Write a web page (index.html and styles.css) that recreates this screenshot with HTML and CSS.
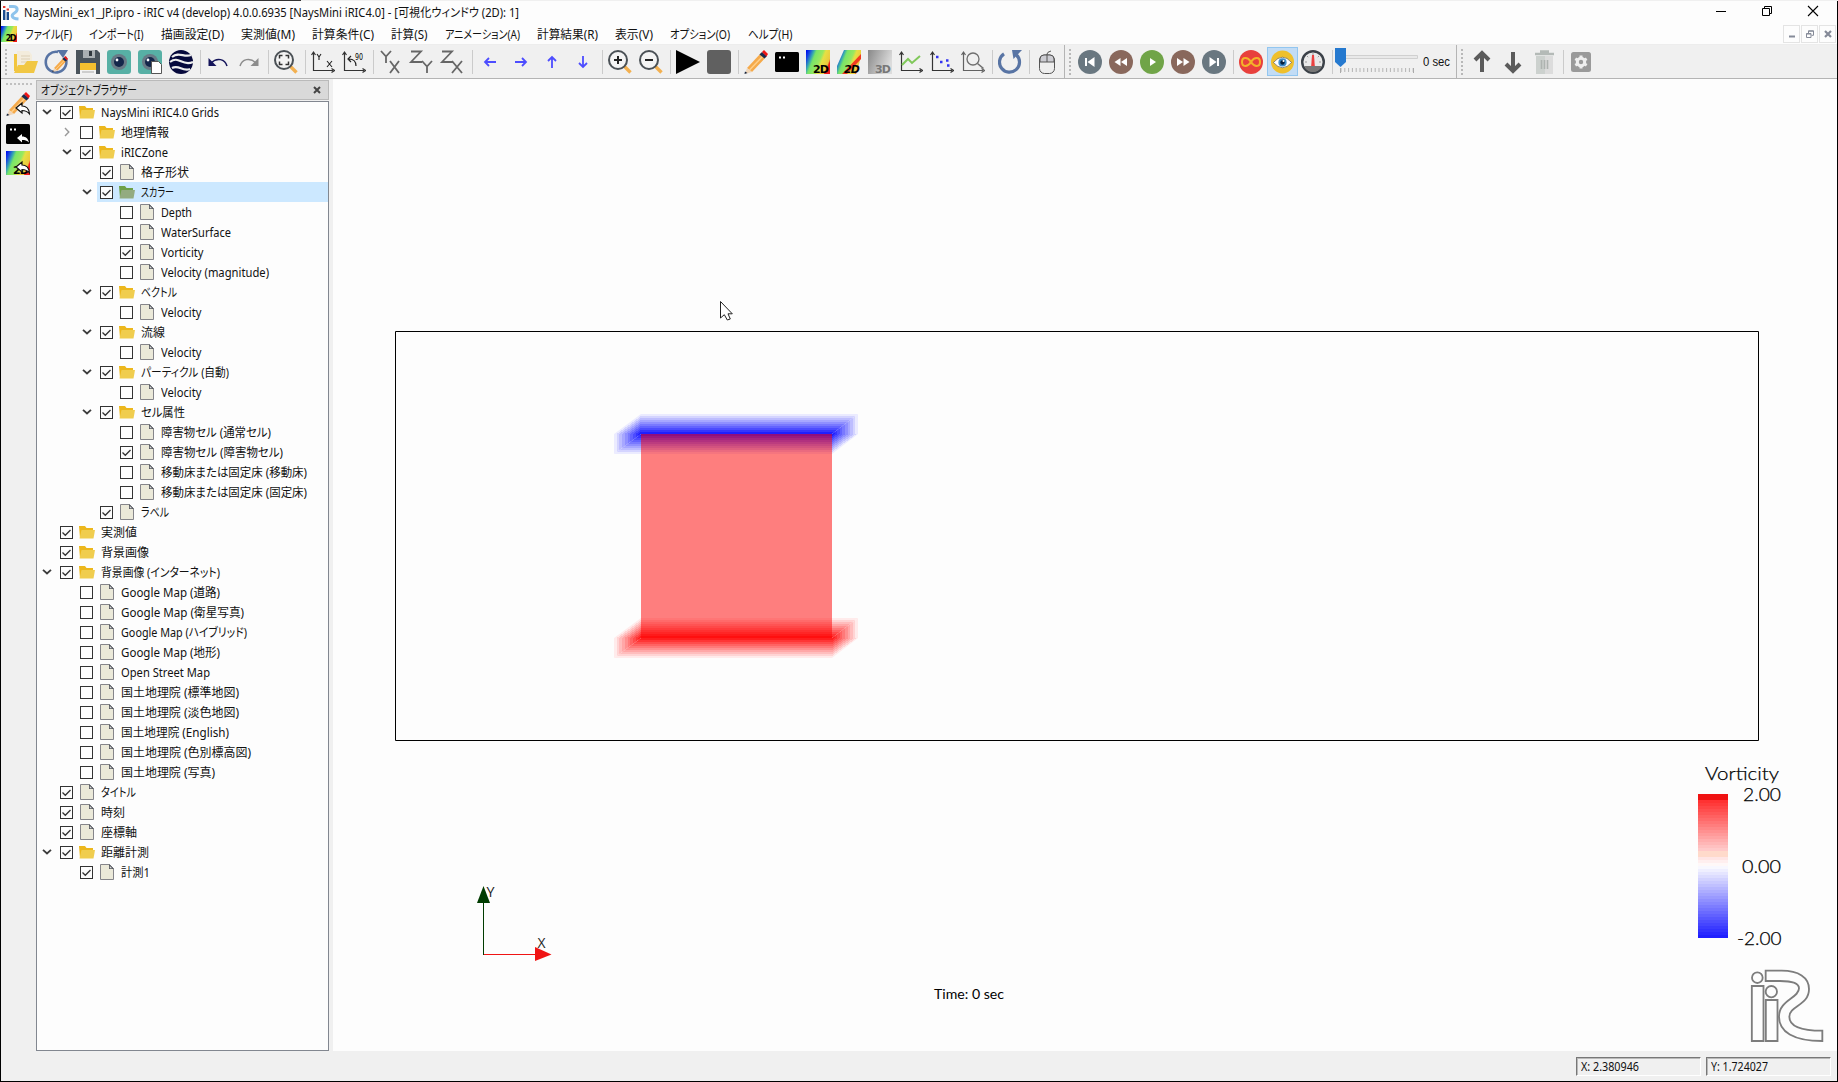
FILE: index.html
```html
<!DOCTYPE html>
<html lang="ja">
<head>
<meta charset="utf-8">
<title>NaysMini_ex1_JP.ipro - iRIC v4</title>
<link rel="stylesheet" href="styles.css">
</head>
<body>
<svg class="defs" width="0" height="0">
  <defs>
    <linearGradient id="rainbow" x1="0" y1="0.1" x2="1" y2="0.5">
      <stop offset="0" stop-color="#0010f0"/><stop offset=".12" stop-color="#1848e0"/><stop offset=".26" stop-color="#38a8b0"/><stop offset=".36" stop-color="#78e468"/><stop offset=".6" stop-color="#98e860"/><stop offset=".7" stop-color="#e6e044"/><stop offset=".94" stop-color="#ecc83c"/><stop offset="1.080" stop-color="#f01818"/>
    </linearGradient>
    <linearGradient id="grays" x1="0" y1="0" x2="1" y2=".4"><stop offset="0" stop-color="#888"/><stop offset="1" stop-color="#dcdcdc"/></linearGradient>
    <symbol id="field2d" viewBox="0 0 24 24"><rect width="24" height="24" fill="url(#rainbow)"/><path d="M24 15v9h-6z" fill="#f01818"/></symbol>
    <symbol id="pencil" viewBox="0 0 24 24"><path d="M3 18 17 3l5 4L8 22z" fill="#f5aa4b"/><path d="M5.500 20 20 5" stroke="#ffd08a" stroke-width="1.500"/><path d="M3 18l5 4-7 2z" fill="#efd5b8"/><path d="M1 21.500 3.500 23 .5 24z" fill="#14233c"/><path d="M15.500 4.500 18 2l5 4-2.500 2.500z" fill="#1c2c50"/><path d="M18 2l2-2 4 4-1.500 2.500z" fill="#f01515"/></symbol>
    <symbol id="console" viewBox="0 0 24 24"><rect y="2" width="24" height="20" rx="1.500"/><path d="M4 6.500h2v2H4zM8 6.500h2v2H8z" fill="#fff"/></symbol>
    <symbol id="axes" viewBox="0 0 24 24"><path d="M2.500 3v17.500H22M.5 5l2-3 2 3M20.500 18.500l3 2-3 2" fill="none" stroke="#333" stroke-width="1.200"/></symbol>
    <symbol id="lens" viewBox="0 0 24 24"><path d="M16 16l6.500 6.500" stroke="#f3b050" stroke-width="3.400"/><circle cx="10" cy="10" r="9" fill="#f4f4f4" stroke="#4b5156" stroke-width="2"/></symbol>
    <symbol id="back" viewBox="0 0 24 24"><path d="M10 16l6-5v3c5 0 7 3 7.500 8-2-2.500-4-3.500-7.500-3.500V21z" fill="#fff" stroke="#111" stroke-width="1.200"/></symbol>
    <symbol id="reload" viewBox="0 0 24 24"><path d="M18.500 5A10 10 0 1 1 6 3.800" fill="none" stroke="#5874a4" stroke-width="3.200"/><path d="M14 0h10l-8.500 9z" fill="#5874a4"/></symbol>
    <symbol id="folder" viewBox="0 0 16 13"><path d="M0 0h6l1.500 2H14v4L1 12z" fill="#ecb71c"/><path d="M2.500 4H16l-1.500 8.500H.5z" fill="#f0cd4e"/></symbol>
    <symbol id="folder-on" viewBox="0 0 16 13"><path d="M0 0h6l1.500 2H14v4L1 12z" fill="#6ea048"/><path d="M2.500 4H16l-1.500 8.500H.5z" fill="#93ab80"/></symbol>
    <symbol id="doc" viewBox="0 0 14 16"><path d="M.5.5h9l4 4v11H.5z" fill="#ebe9d9" stroke="#85858a"/><path d="M9 0l5 5H9z" fill="#55585f"/><path d="M9.800 2v2.300h2.300z" fill="#ddd"/></symbol>
    <symbol id="open" viewBox="0 0 10 6"><path d="M1 .8 5 4.500 9 .8" fill="none" stroke="#3c3c3c" stroke-width="1.800"/></symbol>
    <symbol id="closed" viewBox="0 0 6 10"><path d="M1 1l3.800 4L1 9" fill="none" stroke="#999" stroke-width="1.400"/></symbol>
    <symbol id="app" viewBox="0 0 16 16"><path d="M1.200 5v10M4.800 7v8" stroke="#1c4b8f" stroke-width="2.400"/><path d="M0 2h2.400M3.600 4.500h2.400" stroke="#e03a30" stroke-width="2"/><path d="M6 1.500h4c5.500 0 5 4.500 1.500 6.500S8 13.500 15.500 14" fill="none" stroke="#8fc4ec" stroke-width="3"/></symbol>
  </defs>
</svg>
<div class="desktop-strip"><i></i></div>
<div class="window">
  <header class="titlebar">
    <svg class="app-icon" width="16" height="16"><use href="#app"/></svg>
    <h1><span data-w="495">NaysMini_ex1_JP.ipro - iRIC v4 (develop) 4.0.0.6935 [NaysMini iRIC4.0] - [可視化ウィンドウ (2D): 1]</span></h1>
    <div class="caption">
      <svg width="12" height="12"><path d="M1 6.500h10" stroke="#000"/></svg>
      <svg width="12" height="12"><path d="M1.500 3.500h7v7h-7zM3.500 3V1.500h7v7H9" fill="none" stroke="#000"/></svg>
      <svg width="12" height="12"><path d="M1 1l10 10M11 1 1 11" stroke="#000" stroke-width="1.100"/></svg>
    </div>
  </header>
  <nav class="menubar">
    <svg class="doc-icon" width="16" height="16" viewBox="0 0 24 24"><use href="#field2d"/><text x="7" y="22" class="badge big" textLength="16">2D</text></svg>
    <span data-w="47">ファイル(F)</span><span data-w="54.500">インポート(I)</span><span data-w="63">描画設定(D)</span><span data-w="54">実測値(M)</span><span data-w="62">計算条件(C)</span><span data-w="36.500">計算(S)</span><span data-w="75">アニメーション(A)</span><span data-w="61">計算結果(R)</span><span data-w="38">表示(V)</span><span data-w="60">オプション(O)</span><span data-w="44.500">ヘルプ(H)</span>
    <div class="mdi">
      <b><svg width="8" height="8"><path d="M1 6.500h6" stroke="#858a98" stroke-width="2"/></svg></b>
      <b><svg width="8" height="8"><path d="M.5 3.500h4.500v4H.5zM2.500 3V.8h5v4.500H5.500M.5 4h4.500M2.500 1.200h5" fill="none" stroke="#858a98"/></svg></b>
      <b><svg width="8" height="8"><path d="M1 1l6 6M7 1 1 7" stroke="#858a98" stroke-width="2.200"/></svg></b>
    </div>
  </nav>
  <div class="toolbars">
    <div class="bar main">
      <i class="grip"></i>
      <svg viewBox="0 0 24 24"><path d="M0 4h8v17H0z" fill="#f2c53d"/><path d="M3 1h12l3 4v12H3z" fill="#f3ecdc"/><path d="M7 6h9M7 9h9M7 12h9" stroke="#dccfb5"/><path d="M0 23 4 15h6l3-4h11l-4 12z" fill="#f1c744"/></svg>
      <svg viewBox="0 0 24 24"><path d="M20 7A10.300 10.300 0 1 1 13 2" fill="none" stroke="#5874a4" stroke-width="2.600"/><path d="M12 0h11l-5 8z" fill="#5874a4"/><svg x="7" y="6" width="16" height="16"><use href="#pencil"/></svg></svg>
      <svg viewBox="0 0 24 24"><path d="M0 0h21l3 3v21H0z" fill="#4a545c"/><path d="M7 0h12v8H7z" fill="#aab0b3"/><path d="M13 1h3v5h-3z" fill="#30383e"/><path d="M4 13h16v11H4z" fill="#f2f2f2"/><path d="M4 13h16v7H4z" fill="#f5c02f"/><path d="M6 22h12" stroke="#aaa"/></svg>
      <svg viewBox="0 0 24 24"><rect width="24" height="24" rx="3" fill="#57b0a5"/><circle cx="12" cy="12" r="8" fill="#687a86"/><circle cx="12" cy="12" r="5" fill="#14264a"/><circle cx="10" cy="10" r="1.400" fill="#fff"/></svg>
      <svg viewBox="0 0 24 24"><rect width="24" height="24" rx="3" fill="#57b0a5"/><circle cx="12" cy="12" r="8" fill="#687a86"/><circle cx="12" cy="12" r="5" fill="#14264a"/><circle cx="10" cy="10" r="1.400" fill="#fff"/><path d="M13.500 11.500h7l3 3v9h-10z" fill="#fff" stroke="#555"/></svg>
      <svg viewBox="0 0 24 24"><circle cx="12" cy="12" r="12" fill="#06093c"/><path d="M3 7c7-6 12 1 19-2M1 12c9-7 12 5 23 0M3 18c7-4 10 4 18 1" fill="none" stroke="#eee" stroke-width="2.200"/></svg>
      <i class="sep"></i>
      <svg viewBox="0 0 24 24"><path d="M5 13C11 7 19 9 21 16" fill="none" stroke="#14145a" stroke-width="1.500"/><path d="M2.500 8v8h8z" fill="#14145a"/></svg>
      <svg viewBox="0 0 24 24"><path d="M19 13C13 7 5 9 3 16" fill="none" stroke="#8c8c8c" stroke-width="1.500"/><path d="M21.500 8v8h-8z" fill="#8c8c8c"/></svg>
      <i class="sep"></i>
      <svg viewBox="0 0 24 24"><use href="#lens"/><path d="M5.500 8.500V5.500h3M11.500 5.500h3v3M14.500 11.500v3h-3M8.500 14.500h-3v-3" fill="none" stroke="#333" stroke-width="1.500"/></svg>
      <i class="sep"></i>
      <svg viewBox="0 0 24 24"><use href="#axes"/><path d="M6 4l2 3 2-3M8 7v3M16 11l5 6M21 11l-5 6" fill="none" stroke="#222" stroke-width="1.100"/></svg>
      <svg viewBox="0 0 24 24"><use href="#axes"/><path d="M7 9c5 0 7 2 7 7M9 6 6 9l3 3" fill="none" stroke="#222" stroke-width="1.200"/><text x="13" y="10" class="deg" textLength="8" lengthAdjust="spacingAndGlyphs">90</text></svg>
      <i class="sep"></i>
      <svg viewBox="0 0 24 24" class="letters"><path d="M2 1l5 5.500L12 1M7 6.500V13M11 11l9 12M20 11l-9 12"/></svg>
      <svg viewBox="0 0 24 24" class="letters"><path d="M1 1.500h10L1 12h11M12 11l5 5.500L22 11M17 16.500V23"/></svg>
      <svg viewBox="0 0 24 24" class="letters"><path d="M1 1.500h10L1 12h11M11 11l10 12M21 11 11 23"/></svg>
      <i class="sep"></i>
      <svg viewBox="0 0 24 24" class="nudge"><path d="M18 12H7M11 8l-4 4 4 4"/></svg>
      <svg viewBox="0 0 24 24" class="nudge"><path d="M6 12h11M13 8l4 4-4 4"/></svg>
      <svg viewBox="0 0 24 24" class="nudge"><path d="M12 18V7M8 11l4-4 4 4"/></svg>
      <svg viewBox="0 0 24 24" class="nudge"><path d="M12 6v11M8 13l4 4 4-4"/></svg>
      <i class="sep"></i>
      <svg viewBox="0 0 24 24"><use href="#lens"/><path d="M6 10h8M10 6v8" stroke="#222" stroke-width="2"/></svg>
      <svg viewBox="0 0 24 24"><use href="#lens"/><path d="M6 10h8" stroke="#222" stroke-width="2"/></svg>
      <i class="sep"></i>
      <svg viewBox="0 0 24 24"><path d="M0 0l24 12L0 24z"/></svg>
      <svg viewBox="0 0 24 24"><rect width="24" height="24" rx="3" fill="#606060"/></svg>
      <i class="sep"></i>
      <svg viewBox="0 0 24 24"><use href="#pencil"/></svg>
      <svg viewBox="0 0 24 24"><use href="#console"/></svg>
      <svg viewBox="0 0 24 24"><use href="#field2d"/><text x="7" y="23" class="badge" textLength="16">2D</text></svg>
      <svg viewBox="0 0 24 24"><path d="M7 0h17v7L19 24H0v-8z" fill="url(#rainbow)"/><path d="M24 4v5L10 24H5z" fill="#f03a20"/><text x="7" y="23" class="badge slant" textLength="16">2D</text></svg>
      <svg viewBox="0 0 24 24"><rect width="24" height="24" fill="url(#grays)"/><text x="7" y="23" class="badge dim" textLength="16">3D</text></svg>
      <svg viewBox="0 0 24 24"><use href="#axes"/><path d="M3 15l6-6 4 4 8-7" fill="none" stroke="#80c85a" stroke-width="2"/></svg>
      <svg viewBox="0 0 24 24"><use href="#axes"/><path d="M6 7h2.500M10 12h2.500M16 10.500h2.500M17 15.500h2.500" stroke="#3535ef" stroke-width="2.500"/></svg>
      <svg viewBox="0 0 24 24" class="faded"><use href="#axes"/><circle cx="12" cy="9" r="6" fill="none" stroke="#444" stroke-width="1.300"/><path d="M16.500 13.500l6 5" stroke="#444" stroke-width="1.600"/></svg>
      <i class="sep"></i>
      <svg viewBox="0 0 24 24"><use href="#reload"/></svg>
      <i class="sep"></i>
      <svg viewBox="0 0 24 24"><rect x="4.500" y="5" width="15" height="18.500" rx="5" fill="#eee" stroke="#555"/><path d="M5 12V9q0-4 4-4h6q4 0 4 4v3z" fill="#ccccd2" stroke="#555"/><path d="M12 12V4q0-2 4-3" fill="none" stroke="#555"/></svg>
    </div>
    <div class="bar player">
      <i class="grip"></i>
      <svg viewBox="0 0 24 24"><circle cx="12" cy="12" r="12" fill="#697780"/><path d="M16.500 7v10l-7-5zM7 8h2v8H7z" fill="#fff"/></svg>
      <svg viewBox="0 0 24 24"><circle cx="12" cy="12" r="12" fill="#89685c"/><path d="M11.500 8v8l-6-4zM18 8v8l-6-4z" fill="#fff"/></svg>
      <svg viewBox="0 0 24 24"><circle cx="12" cy="12" r="12" fill="#70a448"/><path d="M10 8v8l6-4z" fill="#fff"/></svg>
      <svg viewBox="0 0 24 24"><circle cx="12" cy="12" r="12" fill="#89685c"/><path d="M6 8v8l6-4zM12.500 8v8l6-4z" fill="#fff"/></svg>
      <svg viewBox="0 0 24 24"><circle cx="12" cy="12" r="12" fill="#697780"/><path d="M7.500 7v10l7-5zM15 8h2v8h-2z" fill="#fff"/></svg>
      <i class="sep"></i>
      <svg viewBox="0 0 24 24"><circle cx="12" cy="12" r="12" fill="#e8403c"/><path d="M12 12C8.500 6.500 3 7 3 12s5.500 5.500 9 0 9-5 9 0-5.500 5.500-9 0z" fill="none" stroke="#f3b32a" stroke-width="2"/></svg>
      <svg viewBox="0 0 24 24" class="pressed"><circle cx="12" cy="12.500" r="12" fill="#efc02d"/><path d="M2.500 13q9.500-11 19 0-9.500 11-19 0z" fill="#fff" stroke="#555" stroke-width=".7"/><circle cx="12" cy="13" r="4.300" fill="#3d8dcc"/><circle cx="12" cy="13" r="2.300" fill="#062040"/><circle cx="13" cy="11.500" r="1" fill="#fff"/></svg>
      <svg viewBox="0 0 24 24"><circle cx="12" cy="12" r="10.800" fill="#e9e9e9" stroke="#3b4148" stroke-width="2.400"/><path d="M3 16h18q-3 6-9 6t-9-6z" fill="#777"/><path d="M12 3v2M4 12h2M18 12h2M6 6l1.200 1.200M18 6l-1.200 1.200" stroke="#999"/><path d="M11 5h2l.8 11h-3.600z" fill="#ea4040"/></svg>
      <i class="sep"></i>
      <svg class="slider" viewBox="0 0 87 33"><path d="M3.500 10.500h79v3h-79z" fill="#e9e9e9" stroke="#d0d0d0"/><path d="M5.500 25h74" stroke="#b4b4b4" stroke-width="4" stroke-dasharray="1 2.800"/><path d="M5.500 23v5M78.500 23v5" stroke="#aaa"/><path d="M0 3h11v14l-5.500 5L0 17z" fill="#2579cf"/></svg>
      <span class="time" data-w="27">0 sec</span>
    </div>
    <div class="bar edit">
      <i class="grip"></i>
      <svg viewBox="0 0 24 24"><path d="M12 22V4M5 10l7-7 7 7" fill="none" stroke="#5b5b5b" stroke-width="4"/></svg>
      <svg viewBox="0 0 24 24"><path d="M12 2v18M5 14l7 7 7-7" fill="none" stroke="#5b5b5b" stroke-width="4"/></svg>
      <svg viewBox="0 0 24 24"><path d="M4 6h17v18H4z" fill="#dcdcdc"/><path d="M4 6h9v18H4z" fill="#ccd1ce"/><path d="M3 4h19M8 1.500h9" stroke="#b4bab7" stroke-width="2.400"/><path d="M9.500 10v9M12.500 10v9M15.500 10v9" stroke="#aeb3b0" stroke-width="1.600"/></svg>
      <i class="sep"></i>
      <svg viewBox="0 0 24 24"><rect x="2" y="2" width="20" height="20" rx="2.500" fill="#9a9a9a"/><circle cx="12" cy="12" r="3.700" fill="none" stroke="#efefef" stroke-width="3"/><path d="M12 5.500v2.500M12 16v2.500M6.300 8.700l2.200 1.300M15.500 14l2.200 1.300M6.300 15.300 8.500 14M15.500 10l2.200-1.300" stroke="#efefef" stroke-width="3"/></svg>
    </div>
  </div>
  <main class="workspace">
    <aside class="side">
      <i class="grip flat"></i>
      <svg viewBox="0 0 24 24"><use href="#pencil"/><use href="#back"/></svg>
      <svg viewBox="0 0 24 24"><use href="#console"/><path d="M11 16l5-4v2.500c4 0 6 2 7 6-2-2-4-2.500-7-2.500v2.500z" fill="#fff"/></svg>
      <svg viewBox="0 0 24 24"><use href="#field2d"/><text x="7" y="23" class="badge" textLength="16">2D</text><use href="#back"/></svg>
    </aside>
    <section class="dock">
      <h2><span data-w="96">オブジェクトブラウザー</span><svg width="8" height="8"><path d="M1 1l6 6M7 1 1 7" stroke="#444" stroke-width="2"/></svg></h2>
      <ul class="tree" id="tree"></ul>
    </section>
    <svg class="view" viewBox="333 79 1504 972" width="1504" height="972">
      <defs id="ramps"></defs>
      <path d="M395.500 331.500h1363v409h-1363z" fill="none" stroke="#000"/>
      <g id="field"></g>
      <path d="M641 434h191v204H641z" fill="#f00" fill-opacity=".5"/>
      <g class="axis">
        <path d="M483.500 903v52" stroke="#003c00"/><path d="M483.500 886l6.500 17h-13z" fill="#003c00"/>
        <path d="M484 954.500h52" stroke="#f01414"/><path d="M551.500 954.500 535 947v14z" fill="#f01414"/>
        <text x="486.500" y="897" textLength="8" lengthAdjust="spacingAndGlyphs">Y</text><text x="537.500" y="948" textLength="8" lengthAdjust="spacingAndGlyphs">X</text>
      </g>
      <text class="clock" x="934" y="999" textLength="70" lengthAdjust="spacingAndGlyphs">Time: 0 sec</text>
      <g class="scale">
        <text x="1705" y="780" textLength="74" lengthAdjust="spacingAndGlyphs">Vorticity</text>
        <text x="1743" y="801" textLength="38" lengthAdjust="spacingAndGlyphs">2.00</text>
        <text x="1742" y="873" textLength="39" lengthAdjust="spacingAndGlyphs">0.00</text>
        <text x="1737" y="945" textLength="44.500" lengthAdjust="spacingAndGlyphs">-2.00</text>
      </g>
      <g id="legend"></g>
      <svg x="1750" y="968.300" width="74" height="74" viewBox="270 685 222 222"><g fill="none" stroke="#7d7d7d" stroke-width="5.500"><circle cx="292" cy="713" r="16"/><path d="M275.500 738h35v165h-35zM317.500 780h35v123h-35z"/><circle cx="334" cy="755" r="17"/><path d="M317 692h48c50 0 82 20 82 55 0 50-59 50-59 83 0 32 42 42 99 42v31c-87 0-130-28-130-73 0-50 60-55 60-85 0-17-27-22-57-22h-43z"/></g></svg>
      <path d="M720.500 301.500v16.500l3.800-3.300 3 5.300 3-1-2.300-5.200h4.300z" fill="#fff" stroke="#222"/>
    </svg>
  </main>
  <footer class="status"><div><span data-w="58">X: 2.380946</span></div><div><span data-w="57">Y: 1.724027</span></div></footer>
</div>
<script src="app.js"></script>
</body>
</html>
```
FILE: styles.css
```css
* { box-sizing: border-box; }
body { margin: 0; width: 1838px; height: 1082px; overflow: hidden; background: #000; color: #111; font: 12px/16px "Noto Sans", "Noto Sans CJK JP", sans-serif; }
.defs { display: block; position: absolute; }
.desktop-strip { height: 1px; background: #f0f0f0; }
.desktop-strip i { display: block; width: 301px; height: 1px; background: #333; }
.window { display: flex; flex-direction: column; width: 1836px; height: 1080px; margin-left: 1px; background: #fdfdfd; }
span[data-w] { display: inline-block; white-space: nowrap; transform-origin: 0 50%; font-feature-settings: "palt"; flex: none; }

.titlebar { display: flex; align-items: center; height: 23px; padding-left: 2px; }
.titlebar h1 { margin: 0 0 0 5px; padding-top: 1px; font: inherit; flex: 1; }
.caption { display: flex; gap: 34px; padding: 0 18px 4px 0; }
.menubar { display: flex; align-items: center; gap: 17.200px; height: 21px; border-bottom: 1px solid #ededed; }
.menubar > span { padding-top: 1px; }
.doc-icon { margin-right: -9.500px; flex: none; }
.mdi { display: flex; gap: 1px; margin-left: auto; padding-right: 1px; }
.mdi b { display: flex; align-items: center; justify-content: center; width: 17px; height: 18px; border: 1px solid #e4e4e4; }

.toolbars { display: flex; height: 34px; background: #f0f0f0; border-bottom: 1px solid #b4b4b4; flex: none; }
.bar { display: flex; align-items: center; border-right: 1px solid #b4b4b4; }
.bar > svg { width: 24px; height: 24px; margin: 0 3.500px; flex: none; overflow: visible; }
.main { width: 1064px; padding-left: 4px; }
.player { width: 392px; padding-left: 4px; }
.edit { border: 0; padding-left: 4px; }
.grip { width: 2px; height: 26px; margin-right: 3.500px; background: repeating-linear-gradient(#b8b8b8 0 2px, transparent 2px 4px); flex: none; }
.edit .grip { margin-right: 3.500px; }
.sep { width: 1px; height: 24px; margin: 0 2px 0 3px; background: #cbcbcb; flex: none; }
.bar .pressed { width: 31px; height: 29px; margin: 0; padding: 2px 3px; background: #c2dcf5; border: 1px solid #92c6f0; }
.bar .slider { width: 87px; height: 33px; margin: 0 1px 0 0; }
.time { font-family: "Liberation Sans", sans-serif; }
.badge { font: bold 11px "DejaVu Sans", sans-serif; }
.big { font-size: 12px; }
.slant { font-style: italic; }
.dim { fill: #777; }
.deg { font: 8px "DejaVu Sans", sans-serif; }
.letters { fill: none; stroke: #666; stroke-width: 1.800; }
.nudge { fill: none; stroke: #4d4dff; stroke-width: 1.800; }
.faded { opacity: .75; }

.workspace { display: flex; flex: 1; min-height: 0; background: #f0f0f0; }
.side { width: 35px; padding: 4px 5px 0; display: flex; flex-direction: column; gap: 5.500px; }
.side > svg { width: 24px; height: 24px; flex: none; overflow: visible; }
.flat { width: 27px; height: 2px; margin: 0 0 1.500px; background: repeating-linear-gradient(90deg, #c0c0c0 0 2px, transparent 2px 4px); }
.dock { width: 293px; margin-right: 4px; display: flex; flex-direction: column; padding-top: 1px; }
.dock h2 { display: flex; align-items: center; justify-content: space-between; height: 20px; margin: 0 0 1px; padding: 0 7px 0 4px; font: inherit; background: #d9d9d9; border: 1px solid #bababa; flex: none; }
.dock h2 span { padding-top: 1px; }
.tree { flex: 1; margin: 0; padding: 0; list-style: none; background: #fdfdfd; border: 1px solid #828790; }
.tree li { display: flex; align-items: center; height: 20px; }
.tree span { padding-top: 2px; }
.twist { width: 20px; display: flex; justify-content: center; padding-right: 1px; flex: none; }
.entry { display: flex; flex: 1; height: 20px; align-items: center; padding-left: 3px; }
.entry.selected { background: #cce8ff; }
.check { width: 13px; height: 13px; border: 1px solid #333; background: #fdfdfd; flex: none; }
.check svg { display: block; }
.glyph { width: 16px; margin: 0 6px 0 6px; display: flex; justify-content: center; flex: none; }
.view { display: block; background: #fdfdfd; flex: none; }
.axis text { font: 14px "Open Sans", sans-serif; fill: #222; }
.clock { font: 13px Lato, sans-serif; }
.scale text { font: 300 18.500px Lato, sans-serif; fill: #000; stroke: #000; stroke-width: .25px; }

.status { display: flex; justify-content: flex-end; gap: 5px; height: 30px; padding: 6px 6px 5px; background: #f0f0f0; flex: none; }
.status div { width: 125px; padding: 1px 0 0 4px; border: 1px solid #fff; border-top-color: #777; border-left-color: #777; box-shadow: inset 1px 1px #b9b9b9; }
```
FILE: app.js
```js
// depth, kind (f folder / d document / s selected folder), checked, twisty, label, label width
const rows = [
  [0,'f',1,'o','NaysMini iRIC4.0 Grids',118],[1,'f',0,'c','地理情報',48],[1,'f',1,'o','iRICZone',47],
  [2,'d',1,'','格子形状',48],[2,'s',1,'o','スカラー',33],
  [3,'d',0,'','Depth',31],[3,'d',0,'','WaterSurface',70],[3,'d',1,'','Vorticity',42.5],[3,'d',0,'','Velocity (magnitude)',108],
  [2,'f',1,'o','ベクトル',36],[3,'d',0,'','Velocity',40.5],
  [2,'f',1,'o','流線',24],[3,'d',0,'','Velocity',40.5],
  [2,'f',1,'o','パーティクル (自動)',88],[3,'d',0,'','Velocity',40.5],
  [2,'f',1,'o','セル属性',44],
  [3,'d',0,'','障害物セル (通常セル)',110],[3,'d',1,'','障害物セル (障害物セル)',122],
  [3,'d',0,'','移動床または固定床 (移動床)',146],[3,'d',0,'','移動床または固定床 (固定床)',146],
  [2,'d',1,'','ラベル',28],
  [0,'f',1,'','実測値',36],[0,'f',1,'','背景画像',48],[0,'f',1,'o','背景画像 (インターネット)',119],
  [1,'d',0,'','Google Map (道路)',99],[1,'d',0,'','Google Map (衛星写真)',123],[1,'d',0,'','Google Map (ハイブリッド)',126],
  [1,'d',0,'','Google Map (地形)',99],[1,'d',0,'','Open Street Map',89],
  [1,'d',0,'','国土地理院 (標準地図)',118],[1,'d',0,'','国土地理院 (淡色地図)',118],[1,'d',0,'','国土地理院 (English)',108],
  [1,'d',0,'','国土地理院 (色別標高図)',130],[1,'d',0,'','国土地理院 (写真)',94],
  [0,'d',1,'','タイトル',35],[0,'d',1,'','時刻',24],[0,'d',1,'','座標軸',36],
  [0,'f',1,'o','距離計測',48],[1,'d',1,'','計測1',29]
];
const tick = '<svg width="11" height="11"><path d="M1.500 5.500l2.800 2.800L9.500 3" fill="none" stroke="#333" stroke-width="1.300"/></svg>';
const twisties = { o: '<svg width="10" height="6"><use href="#open"/></svg>', c: '<svg width="6" height="10"><use href="#closed"/></svg>' };
document.getElementById('tree').innerHTML = rows.map(([depth, kind, on, twist, label, width]) => {
  const icon = kind === 'd' ? '<svg width="14" height="16"><use href="#doc"/></svg>'
    : `<svg width="16" height="13"><use href="#${kind === 's' ? 'folder-on' : 'folder'}"/></svg>`;
  return `<li style="padding-left:${depth * 20}px"><i class="twist">${twisties[twist] || ''}</i>` +
    `<div class="entry${kind === 's' ? ' selected' : ''}"><i class="check">${on ? tick : ''}</i>` +
    `<i class="glyph">${icon}</i><span data-w="${width}">${label}</span></div></li>`;
}).join('');

// Squeeze labels to the widths of the compact UI face.
for (const el of document.querySelectorAll('span[data-w]')) {
  const natural = el.getBoundingClientRect().width;
  const width = +el.dataset.w;
  el.style.transform = `scaleX(${width / natural})`;
  el.style.marginRight = `${width - natural}px`;
}

// Diverging colour map: -1 blue, 0 white, 1 red.
function colour(v) {
  const fade = Math.round(253 - Math.abs(v) * 227);
  return v < 0 ? `rgb(${fade},${fade},255)` : `rgb(255,${fade},${fade})`;
}

// Triangulated vorticity bands around the upper and lower obstacle edges.
const steps = 10;
let ramps = '', field = '';
function ramp(id, sign, x1, y1, x2, y2) {
  let stops = '';
  for (let i = 0; i < steps; i++) {
    const c = colour(sign * (i + 0.8) / steps);
    stops += `<stop offset="${i / steps}" stop-color="${c}"/><stop offset="${(i + 1) / steps}" stop-color="${c}"/>`;
  }
  ramps += `<linearGradient id="${id}" gradientUnits="userSpaceOnUse" x1="${x1}" y1="${y1}" x2="${x2}" y2="${y2}">${stops}</linearGradient>`;
}
function band(name, sign, y) {
  const l = 614, a = 641, b = 832, r = 858, h = 20, w = 27;
  const k = w * w * h * h / (w * w + h * h), dx = k / w, dy = k / h;
  ramp(name + 'T', sign, 0, y - h, 0, y);
  ramp(name + 'B', sign, 0, y + h, 0, y);
  ramp(name + 'L', sign, l, 0, a, 0);
  ramp(name + 'R', sign, r, 0, b, 0);
  ramp(name + 'P', sign, a - dx, y - dy, a, y);
  ramp(name + 'Q', sign, b + dx, y + dy, b, y);
  const shape = (fill, pts) => { field += `<polygon fill="url(#${name + fill})" points="${pts}"/>`; };
  shape('T', `${a},${y - h} ${r},${y - h} ${b},${y} ${a},${y}`);
  shape('B', `${a},${y} ${b},${y} ${b},${y + h} ${l},${y + h}`);
  shape('L', `${l},${y} ${a},${y} ${l},${y + h}`);
  shape('R', `${r},${y} ${b},${y} ${r},${y - h}`);
  shape('P', `${l},${y} ${a},${y - h} ${a},${y}`);
  shape('Q', `${b},${y} ${r},${y} ${b},${y + h}`);
}
band('neg', -1, 434);
band('pos', 1, 638);
document.getElementById('ramps').innerHTML = ramps;
document.getElementById('field').innerHTML = field;

let legend = '';
for (let i = 0; i < 48; i++) {
  const v = 1 - (i + 0.5) / 24;
  let c = colour(v);
  if (i < 2) c = '#f01212';
  if (i === 19 || i === 20) c = '#ffdacb';
  legend += `<path d="M1698 ${794 + i * 3}h30v3h-30z" fill="${c}"/>`;
}
document.getElementById('legend').innerHTML = legend;
```
